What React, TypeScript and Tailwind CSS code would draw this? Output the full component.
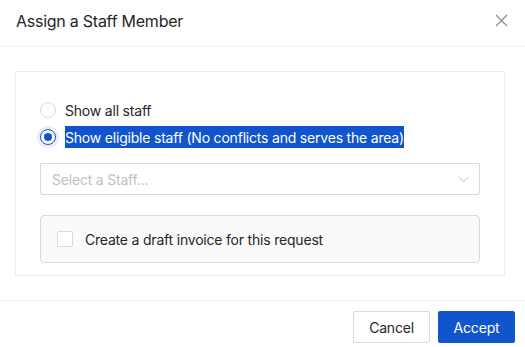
import React from 'react'

const App = () => {
  return (
    <div className="w-[525px] h-[347px] bg-white font-['Inter',sans-serif] text-[#262626] tracking-[-0.2px] flex flex-col">
      <header className="h-[47px] shrink-0 px-4 pb-[5px] flex items-center justify-between border-b border-[#efefef]">
        <span className="text-[16px] tracking-[-0.25px]">Assign a Staff Member</span>
        <svg width="13" height="13" viewBox="0 0 13 13" className="mr-[1px]">
          <path d="M1 1L12 12M12 1L1 12" stroke="#8c8c8c" strokeWidth="1.3" />
        </svg>
      </header>

      <div className="pl-[15px] pr-[20px] pt-[24px] pb-[24px]">
        <div className="border border-[#ebebeb] rounded-[2px] px-[24px] pt-[27px] pb-[12px]">
          <div className="flex flex-col gap-[5px]">
            <label className="h-[22px] flex items-center gap-[9px] text-[14px]">
              <span className="w-[16px] h-[16px] rounded-full border border-[#d9d9d9] bg-white" />
              <span>Show all staff</span>
            </label>
            <label className="h-[22px] flex items-center gap-[9px] text-[14px]">
              <span className="w-[16px] h-[16px] rounded-full border border-[#1155cc] bg-white flex items-center justify-center ring-[3px] ring-[#1155cc]/10">
                <span className="w-[8px] h-[8px] rounded-full bg-[#1155cc]" />
              </span>
              <span className="bg-[#1155cc] text-white h-[22px] flex items-center">
                Show eligible staff (No conflicts and serves the area)
              </span>
            </label>
          </div>

          <div className="mt-[15px] h-[32px] border border-[#d9d9d9] rounded-[2px] flex items-center justify-between pl-[11px] pr-[10px]">
            <span className="text-[14px] text-[#bfbfbf]">Select a Staff...</span>
            <svg width="11" height="7" viewBox="0 0 11 7">
              <path d="M0.5 0.8L5.5 5.8L10.5 0.8" stroke="#bfbfbf" strokeWidth="1" fill="none" />
            </svg>
          </div>

          <div className="mt-[20px] h-[48px] bg-[#fafafa] border border-[#d9d9d9] rounded-[4px] flex items-center pl-[16px] gap-[12px]">
            <span className="w-[16px] h-[16px] rounded-[2px] border border-[#d9d9d9] bg-white" />
            <span className="text-[14px]">Create a draft invoice for this request</span>
          </div>
        </div>
      </div>

      <footer className="border-t border-[#efefef] flex justify-end gap-[8px] px-[10px] pt-[10px]">
        <button className="w-[77px] h-[32px] border border-[#d9d9d9] rounded-[2px] bg-white text-[14px] text-[#262626]">
          Cancel
        </button>
        <button className="w-[77px] h-[32px] rounded-[2px] bg-[#1155cc] text-[14px] text-white">
          Accept
        </button>
      </footer>
    </div>
  )
}

export default App
